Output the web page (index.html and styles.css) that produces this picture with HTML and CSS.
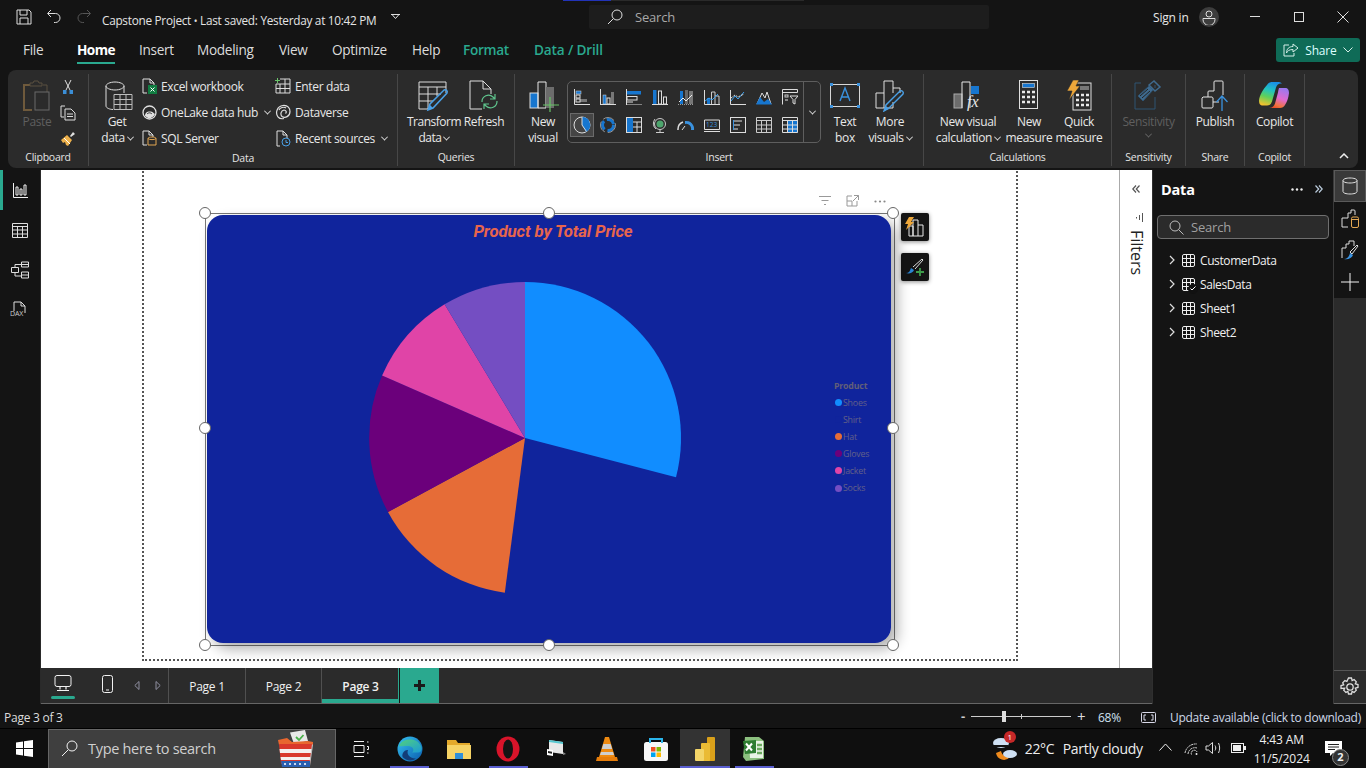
FILE: index.html
```html
<!DOCTYPE html>
<html lang="en">
<head>
<meta charset="utf-8">
<title>Capstone Project - Power BI Desktop</title>
<link rel="stylesheet" href="styles.css">
</head>
<body>
<div class="app">
  <header class="titlebar">
    <div class="sliver"></div>
    <div class="qat">
      <svg width="16" height="16" viewBox="0 0 16 16" class="ln"><path d="M1 1h12l2 2v12H1zM4 1v5h7V1M4 15v-6h8v6"/></svg>
      <svg width="16" height="16" viewBox="0 0 16 16" class="ln"><path d="M5 1L1.500 4.500 5 8M2 4.500h7.500a4.500 4.500 0 0 1 0 9H8"/></svg>
      <svg width="16" height="16" viewBox="0 0 16 16" class="ln dim"><path d="M11 1l3.500 3.500L11 8M14 4.500H6.500a4.500 4.500 0 0 0 0 9H8"/></svg>
    </div>
    <div class="doc-title">Capstone Project <span class="dot">•</span> Last saved: Yesterday at 10:42 PM</div>
    <svg class="doc-caret ln" width="9" height="6" viewBox="0 0 9 6"><path d="M0 .5h9M1 .5l3.500 4 3.500-4"/></svg>
    <div class="top-search">
      <svg width="16" height="16" viewBox="0 0 16 16" class="ln"><circle cx="10" cy="6" r="5"/><path d="M6.500 9.500L1 15"/></svg>
      <span>Search</span>
    </div>
    <div class="sign">Sign in</div>
    <div class="avatar"><svg width="14" height="15" viewBox="0 0 14 15" class="ln"><circle cx="7" cy="4" r="3"/><path d="M1 8.500h12v1a5 5 0 0 1-12 0z"/></svg></div>
    <div class="winctl">
      <svg width="12" height="12" viewBox="0 0 12 12" class="ln"><path d="M1 5.500h10"/></svg>
      <svg width="12" height="12" viewBox="0 0 12 12" class="ln"><rect x="1.500" y="1.500" width="9" height="9"/></svg>
      <svg width="12" height="12" viewBox="0 0 12 12" class="ln"><path d="M.5.500l11 11M11.500.500l-11 11"/></svg>
    </div>
  </header>

  <nav class="tabs">
    <a class="tab t-file">File</a>
    <a class="tab t-home active">Home</a>
    <a class="tab t-insert">Insert</a>
    <a class="tab t-model">Modeling</a>
    <a class="tab t-view">View</a>
    <a class="tab t-opt">Optimize</a>
    <a class="tab t-help">Help</a>
    <a class="tab t-format ctx">Format</a>
    <a class="tab t-drill ctx">Data / Drill</a>
    <button class="share">
      <svg width="16" height="14" viewBox="0 0 16 14" class="ln"><path d="M10 1l5 4-5 4V6.500C6 6.500 4.500 8 3.500 10 3.500 6 6 3.500 10 3.500zM6 2H1v11h10V10"/></svg>
      <span>Share</span>
      <svg width="10" height="6" viewBox="0 0 10 6" class="ln"><path d="M.5.500L5 5 9.500.500"/></svg>
    </button>
  </nav>

  <section class="ribbon">
    <div class="group g-clip">
      <div class="body">
        <div class="tool w-paste">
          <div class="ico"><svg width="30" height="32" viewBox="0 0 30 32" fill="none"><path d="M8 5H2v25h8" stroke="#6f5a3c" stroke-width="2"/><path d="M8 3h3l1-2h4l1 2h3v3H8zM21 5h4v7" stroke="#5a5040" /><rect x="13" y="12" width="14" height="18" stroke="#6a6a6a"/></svg></div>
          <div class="lbl off">Paste</div>
        </div>
        <div class="stack-small">
          <svg width="12" height="16" viewBox="0 0 12 16" fill="none"><path d="M3 1l5 10M9 1L4 11" stroke="#e0e0e0"/><rect x="1" y="11" width="3.500" height="4" fill="#3b8ed6"/><rect x="7.500" y="11" width="3.500" height="4" fill="#3b8ed6"/></svg>
          <svg width="16" height="16" viewBox="0 0 16 16" class="ln"><path d="M5 1H1v11h3M5 4h6l4 4v7H5zM7 9h6M7 11.500h6"/></svg>
          <svg width="16" height="16" viewBox="0 0 16 16" fill="none"><path d="M10 5l3-4 2 2-4 3z" fill="#e0e0e0"/><path d="M1 9l6-5 5 5-4 6-2-1-1-3-2 1z" fill="#eeb14b"/><path d="M4 7l6 6" stroke="#fff"/></svg>
        </div>
      </div>
      <div class="glabel">Clipboard</div>
    </div>

    <div class="group g-data">
      <div class="body">
        <div class="tool w-get">
          <div class="ico"><svg class="nudge2" width="28" height="32" viewBox="0 0 28 32"><path d="M1 6v20c0 2 4 3.500 7 3.500M19 6v7M1 6c0-2 4-4 9-4s9 2 9 4-4 4-9 4-9-2-9-4z" fill="none" stroke="#dedede"/><path d="M9 14.500h18v15H9zM9 19.500h18M9 24.500h18M15 14.500v15M21 14.500v15" fill="none" stroke="#bdbdbd"/></svg></div>
          <div class="lbl">Get</div>
          <div class="lbl">data <i class="chev"></i></div>
        </div>
        <div class="rows col-a">
          <div class="row"><svg width="15" height="16" viewBox="0 0 15 16" fill="none"><path d="M1 15V1h7l4 4v3M8 1v4h4M1 15h4" stroke="#e0e0e0"/><rect x="6" y="7" width="9" height="9" fill="#107c41"/><path d="M8.500 9.500l4 4M12.500 9.500l-4 4" stroke="#fff"/></svg><span>Excel workbook</span></div>
          <div class="row"><svg width="15" height="15" viewBox="0 0 15 15" fill="none"><circle cx="7.500" cy="7.500" r="6.500" stroke="#e0e0e0" stroke-width="1.300"/><path d="M3 11c0-4 3-5 6-4.500 2 .3 3 2 4 2.500-1 3-5 5-7 4z" fill="#e0e0e0"/><path d="M5 9c2-2 4-1 5 0" stroke="#2b2b2b"/></svg><span>OneLake data hub</span><i class="chev"></i></div>
          <div class="row"><svg width="15" height="16" viewBox="0 0 15 16" fill="none"><path d="M5 15H1V1h6l4 4v2M7 1v4h4" stroke="#e0e0e0"/><path d="M6 8.500c0-2 8-2 8 0V15H6z" stroke="#e4a853"/><path d="M6 8.500c1 1.500 7 1.500 8 0" stroke="#e4a853"/></svg><span>SQL Server</span></div>
        </div>
        <div class="rows">
          <div class="row"><svg width="16" height="16" viewBox="0 0 16 16" fill="none"><path d="M5 1h10v14H1V6h14M5 6v9M10 1v14M1 10.500h14" stroke="#dcdcdc" /><path d="M2.500 0v5M0 2.500h5" stroke="#6ac46a"/></svg><span>Enter data</span></div>
          <div class="row"><svg width="16" height="16" viewBox="0 0 16 16" fill="none" stroke="#e0e0e0" stroke-width="1.200"><path d="M3 13C0 9 2 2 8 1.500c5-.5 7 3 7 6 0 5-5 7-8 5-2-2-1-6 2-6.500 2 0 3 2 1.500 3.500"/><path d="M3 13c2 2 4 2 6 1.500M4 6C5 3.500 9 2.500 11 4"/></svg><span>Dataverse</span></div>
          <div class="row"><svg width="16" height="17" viewBox="0 0 16 17" fill="none"><path d="M5 16H2V1h6l4 4v3M8 1v4h4" stroke="#e0e0e0"/><circle cx="11" cy="12" r="4" stroke="#4aa0e6"/><path d="M11 10v2.500h2" stroke="#4aa0e6"/></svg><span>Recent sources</span><i class="chev"></i></div>
        </div>
      </div>
      <div class="glabel">Data</div>
    </div>

    <div class="group g-query">
      <div class="body">
        <div class="tool w-transform">
          <div class="ico"><svg width="32" height="32" viewBox="0 0 32 32" fill="none"><path d="M1 2h27v11M1 7h27M1 2v27h10M1 14h22M1 21h14M10 7v22M19 7v9" stroke="#dcdcdc"/><path d="M10 30l2-6L26 10c2-1 4 1 3 3L15 28z" stroke="#4aa0e6" stroke-width="1.500"/><path d="M10 30l2-5 3 3z" fill="#4aa0e6"/></svg></div>
          <div class="lbl">Transform</div>
          <div class="lbl">data <i class="chev"></i></div>
        </div>
        <div class="tool w-refresh">
          <div class="ico"><svg width="30" height="32" viewBox="0 0 30 32" fill="none"><path d="M13 29H1V1h13l8 8v5M14 1v8h8" stroke="#e0e0e0"/><path d="M13 22a6.500 6.500 0 0 1 11-5l2 2M28 21a6.500 6.500 0 0 1-11 5l-2-2M26 14v5h-5M15 29v-5h5" stroke="#5fc48d" stroke-width="1.200"/></svg></div>
          <div class="lbl">Refresh</div>
        </div>
      </div>
      <div class="glabel">Queries</div>
    </div>

    <div class="group g-insert">
      <div class="body">
        <div class="tool w-newvis">
          <div class="ico"><svg class="nudge1" width="30" height="32" viewBox="0 0 30 32" fill="none"><rect x="1" y="13" width="8" height="15" fill="#1776cf" stroke="#dcdcdc"/><path d="M9 28V2h8v26H9" stroke="#e8e8e8"/><rect x="17" y="7" width="8" height="21" fill="#6c6c6c"/><path d="M21 17v15M14 25h16" stroke="#66c466" stroke-width="1.200"/></svg></div>
          <div class="lbl">New</div>
          <div class="lbl">visual</div>
        </div>
        <div class="gallery">
          <div class="gal-grid">
            <span class="g"><svg viewBox="0 0 16 16" width="16" height="16" fill="none"><path d="M.5 0v15.500H16" stroke="#ddd"/><rect x="2" y="2" width="5" height="3" fill="#1776cf" stroke="#ddd" stroke-width=".5"/><rect x="2" y="6" width="4" height="3" stroke="#ddd"/><rect x="6" y="10" width="7" height="3" fill="#777"/><rect x="2" y="10" width="4" height="3" stroke="#ddd"/></svg></span>
            <span class="g"><svg viewBox="0 0 16 16" width="16" height="16" fill="none"><path d="M0 15.500h16M.5 0v16" stroke="#ddd"/><rect x="3" y="6" width="3" height="9" fill="#1776cf" stroke="#ddd" stroke-width=".5"/><rect x="7" y="9" width="3" height="6" stroke="#ddd"/><rect x="11" y="3" width="3" height="12" fill="#777"/></svg></span>
            <span class="g"><svg viewBox="0 0 16 16" width="16" height="16" fill="none"><path d="M.5 0v16H16" stroke="#ddd"/><rect x="1" y="2" width="14" height="3.500" fill="#1776cf"/><rect x="1" y="7.500" width="10" height="3.500" stroke="#ddd"/><path d="M1 13h6" stroke="#ddd"/></svg></span>
            <span class="g"><svg viewBox="0 0 16 16" width="16" height="16" fill="none"><path d="M0 15.500h16" stroke="#ddd"/><rect x="1" y="1" width="3.500" height="14" fill="#1776cf"/><rect x="6.500" y="2" width="3" height="13" stroke="#ddd"/><rect x="11.500" y="8" width="3" height="7" stroke="#ddd"/></svg></span>
            <span class="g"><svg viewBox="0 0 16 16" width="16" height="16" fill="none"><path d="M0 15.500h16" stroke="#999" stroke-dasharray="1"/><rect x="2" y="2" width="3" height="13" fill="#1776cf"/><rect x="7" y="1" width="3" height="14" fill="#666"/><rect x="11" y="2" width="4" height="13" fill="#777"/><path d="M1 13l4-4 3 3 6-6" stroke="#eee"/></svg></span>
            <span class="g"><svg viewBox="0 0 16 16" width="16" height="16" fill="none"><path d="M.5 1v14.500H16" stroke="#ddd"/><rect x="3" y="9" width="3" height="6" fill="#1776cf"/><path d="M7.500 15V3h3.500v12M11 7h4v8" stroke="#ccc"/><path d="M1 12l4-3 3 2 6-6" stroke="#3aa0ef"/></svg></span>
            <span class="g"><svg viewBox="0 0 16 16" width="16" height="16" fill="none"><path d="M.5 1v14.500H16" stroke="#ddd"/><path d="M1 12l4-5 3 3 6-7" stroke="#3aa0ef"/><path d="M1 9l4-3 3 2 6-3" stroke="#ddd" stroke-dasharray="2 1"/></svg></span>
            <span class="g"><svg viewBox="0 0 16 16" width="16" height="16" fill="none"><path d="M1 15L6 4l3 5 2-6 4 12" stroke="#ddd"/><path d="M0 15.500L4 8l4 5 4-3 4 5.500z" fill="#1776cf"/></svg></span>
            <span class="g"><svg viewBox="0 0 16 16" width="16" height="16" fill="none"><path d="M.5 15.500v-15h15v3M.5 3.500h15" stroke="#ddd"/><rect x="3" y="6" width="3" height="2" stroke="#ccc"/><rect x="3" y="10" width="3" height="2" fill="#888"/><path d="M8 7h8l-3 3.500V15l-2-1v-3.500z" stroke="#ddd"/></svg></span>
            <span class="g sel"><svg viewBox="0 0 18 18" width="18" height="18" fill="none"><circle cx="9" cy="9" r="8" stroke="#ddd"/><path d="M9 1a8 8 0 0 1 4 15L9 9z" fill="#1776cf"/><path d="M9 1v8l4.500 6.500" stroke="#ddd"/></svg></span>
            <span class="g"><svg viewBox="0 0 16 16" width="16" height="16" fill="none"><circle cx="8" cy="8" r="5.500" stroke="#1776cf" stroke-width="3" stroke-dasharray="9 3"/><circle cx="8" cy="8" r="7.500" stroke="#ddd" stroke-width=".6" stroke-dasharray="12 3"/></svg></span>
            <span class="g"><svg viewBox="0 0 16 16" width="16" height="16" fill="none"><rect x=".5" y=".5" width="15" height="15" stroke="#ddd"/><rect x="1" y="1" width="6" height="14" fill="#1776cf"/><path d="M7 5h8M11 5v10M7 10h8" stroke="#ddd"/></svg></span>
            <span class="g"><svg viewBox="0 0 16 16" width="16" height="16" fill="none"><circle cx="8" cy="7" r="5.500" stroke="#ccc"/><circle cx="8" cy="7" r="3.500" fill="#4da56d"/><path d="M8 12.500V15M4 15.500h8M3 2a7 7 0 0 0 1 10" stroke="#ccc"/></svg></span>
            <span class="g"><svg viewBox="0 0 18 12" width="18" height="12" fill="none"><path d="M1 11a8 8 0 0 1 5-8" stroke="#ddd" stroke-width="1.500"/><path d="M8 2a8 8 0 0 1 9 9h-3a5 5 0 0 0-6-6z" fill="#3a92df"/><path d="M5 11l3-4" stroke="#ddd"/></svg></span>
            <span class="g"><svg viewBox="0 0 16 14" width="16" height="14" fill="none"><path d="M.5 2v9.500h15V2zM0 13.500h16" stroke="#ddd"/><text x="2" y="9" class="svgnum">123</text></svg></span>
            <span class="g"><svg viewBox="0 0 16 16" width="16" height="16" fill="none"><rect x=".5" y=".5" width="15" height="15" stroke="#ddd"/><path d="M4 4h8M4 8h6M4 12h4" stroke="#ddd"/><path d="M3.500 3v10" stroke="#3a92df"/></svg></span>
            <span class="g"><svg viewBox="0 0 16 16" width="16" height="16" fill="none"><path d="M.5.500h15v15H.5zM.5 3.500h15M.5 8h15M.5 12h15M5.500 3.500v12M10.500 3.500v12" stroke="#ccc"/></svg></span>
            <span class="g"><svg viewBox="0 0 16 16" width="16" height="16" fill="none"><rect x="5" y="4" width="11" height="12" fill="#1776cf"/><path d="M.5.500h15v15H.5zM.5 3.500h15M.5 8h15M.5 12h15M5.500 3.500v12M10.500 3.500v12" stroke="#ddd"/></svg></span>
          </div>
          <div class="gal-more"><i class="chev bold"></i></div>
        </div>
        <div class="tool w-textbox">
          <div class="ico"><svg width="32" height="26" viewBox="0 0 32 26" fill="none"><rect x="1.500" y="2.500" width="29" height="22" stroke="#d8d8d8"/><path d="M1 1h3v3H1zM28 1h3v3h-3zM1 23h3v3H1zM28 23h3v3h-3z" fill="#3a92df"/><path d="M11 19l5-13 5 13M12.500 15h7" stroke="#3a92df" stroke-width="1.400"/></svg></div>
          <div class="lbl">Text</div>
          <div class="lbl">box</div>
        </div>
        <div class="tool w-more">
          <div class="ico"><svg width="30" height="32" viewBox="0 0 30 32" fill="none"><path d="M9 28H1V13h8M9 13V1h9v12M18 8h7v5M9 28V13M18 22v6H9" stroke="#e0e0e0"/><path d="M9 31l2-6L25 11c2-1 4 1 3 3L14 28z" stroke="#4aa0e6" stroke-width="1.400"/><path d="M9 31l2-5 3 3z" fill="#4aa0e6"/></svg></div>
          <div class="lbl">More</div>
          <div class="lbl">visuals <i class="chev"></i></div>
        </div>
      </div>
      <div class="glabel">Insert</div>
    </div>

    <div class="group g-calc">
      <div class="body">
        <div class="tool w-nvc">
          <div class="ico"><svg width="30" height="32" viewBox="0 0 30 32" fill="none"><rect x="1" y="14" width="8" height="14" fill="#6c6c6c" stroke="#aaa"/><path d="M9 28V2h8v26" stroke="#e8e8e8"/><rect x="18" y="6" width="8" height="8" fill="#1776cf"/><text x="14" y="27" class="fx">fx</text></svg></div>
          <div class="lbl">New visual</div>
          <div class="lbl">calculation <i class="chev"></i></div>
        </div>
        <div class="tool w-nm">
          <div class="ico"><svg width="20" height="30" viewBox="0 0 20 30" fill="none"><rect x=".5" y=".5" width="18" height="28" stroke="#e0e0e0"/><rect x="3.500" y="3.500" width="12" height="4" fill="#1776cf" stroke="#ddd" stroke-width=".6"/><path d="M3 12h3M8 12h3M13 12h3M3 17h3M8 17h3M13 17h3M3 22h3M8 22h3M13 22h3" stroke="#e8e8e8" stroke-width="2.500"/></svg></div>
          <div class="lbl">New</div>
          <div class="lbl">measure</div>
        </div>
        <div class="tool w-qm">
          <div class="ico"><svg width="26" height="32" viewBox="0 0 26 32" fill="none"><rect x="7" y="3" width="18" height="27" stroke="#e0e0e0"/><rect x="14" y="6" width="9" height="4" fill="#777"/><path d="M10 15h3M15 15h3M20 15h3M10 20h3M15 20h3M20 20h3M10 25h3M15 25h3M20 25h3" stroke="#e8e8e8" stroke-width="2.500"/><path d="M7 0h6l-3 6h4L3 20l3-9H1z" fill="#eda73a" stroke="#2b2b2b" stroke-width=".6"/></svg></div>
          <div class="lbl">Quick</div>
          <div class="lbl">measure</div>
        </div>
      </div>
      <div class="glabel">Calculations</div>
    </div>

    <div class="group g-sens">
      <div class="body center">
        <div class="tool">
          <div class="ico"><svg width="28" height="32" viewBox="0 0 28 32" fill="none" stroke="#2f5472"><path d="M1 3h6M1 3v26h20V17M21 5v3"/><path d="M4 16L15 6l4 4L9 21z" fill="#3f6a8e"/><path d="M15 5l5-4 6 6-5 4z" stroke="#3f6a8e" stroke-width="1.500"/><path d="M6 16l8-7M8 18l8-7" stroke="#222"/></svg></div>
          <div class="lbl off">Sensitivity</div>
          <div class="lbl off"><i class="chev dimc"></i></div>
        </div>
      </div>
      <div class="glabel">Sensitivity</div>
    </div>

    <div class="group g-share">
      <div class="body center">
        <div class="tool">
          <div class="ico"><svg width="28" height="32" viewBox="0 0 28 32" fill="none"><path d="M2 17h9a2 2 0 0 1 1 1v9a2 2 0 0 1-1 1H2a1 1 0 0 1-1-1v-9zM7 17v-5a1 1 0 0 1 1-1h5M13 11V2a1 1 0 0 1 1-1h7a1 1 0 0 1 1 1v13M12 22h6" stroke="#e4e4e4"/><path d="M21 31V16M15.500 22l5.500-6 5.500 6" stroke="#3a92df" stroke-width="1.300"/></svg></div>
          <div class="lbl">Publish</div>
        </div>
      </div>
      <div class="glabel">Share</div>
    </div>

    <div class="group g-copilot">
      <div class="body center">
        <div class="tool">
          <div class="ico"><svg width="30" height="30" viewBox="0 0 30 30">
            <defs>
              <linearGradient id="cpa" x1=".6" y1="0" x2=".3" y2="1"><stop offset="0" stop-color="#1a8fe8"/><stop offset=".35" stop-color="#22c3c0"/><stop offset=".65" stop-color="#5fd05a"/><stop offset="1" stop-color="#f2c12e"/></linearGradient>
              <linearGradient id="cpb" x1=".7" y1="0" x2=".3" y2="1"><stop offset="0" stop-color="#9a78f0"/><stop offset=".5" stop-color="#e06ad0"/><stop offset=".85" stop-color="#f0743e"/><stop offset="1" stop-color="#e8502a"/></linearGradient>
            </defs>
            <path d="M8 5c1-2 3-3 5-3h7c1 0 2 .5 3 1.500-3-.5-5 1-6 4l-4 14c-1 3-3 4-5 4H4c-3 0-4-2-4-5 .5-5 4-11 8-15.500z" fill="url(#cpa)"/>
            <path d="M20 8h6c3 0 4 2 4 5-.5 5-2 9-4 12-1 2-3 3-5 3H10c3 0 5-1.500 6-4.500l3-11c.2-1.500.5-3 1-4.500z" fill="url(#cpb)"/>
          </svg></div>
          <div class="lbl">Copilot</div>
        </div>
      </div>
      <div class="glabel">Copilot</div>
    </div>
    <div class="collapse"><svg width="10" height="6" viewBox="0 0 10 6" fill="none" stroke="#eee" stroke-width="1.500"><path d="M1 5l4-4 4 4"/></svg></div>
  </section>

  <main class="main">
    <aside class="rail">
      <div class="rail-btn on"><svg width="15" height="15" viewBox="0 0 15 15" class="ln bright"><path d="M.5 0v14.500H15M3 4h2v8H3zM7 6h2v6H7zM11 2h2v10h-2z"/></svg></div>
      <div class="rail-btn"><svg width="16" height="15" viewBox="0 0 16 15" class="ln"><path d="M.5.500h15v14H.5zM.5 3.500h15M.5 7h15M.5 11h15M5.500 3.500v11M10.500 3.500v11"/></svg></div>
      <div class="rail-btn"><svg width="18" height="18" viewBox="0 0 18 18" class="ln"><path d="M.5 6.500h7v5h-7zM10.500 1h7v5h-7zM10.500 11h7v6h-7zM4 6.500V3.500h6.500M4 11.500v3.500h6.500M10.500 3.500h7M10.500 14h7"/></svg></div>
      <div class="rail-btn"><div class="dax"><svg width="14" height="14" viewBox="0 0 14 14" class="ln"><path d="M1 10V1h7l4 4v7M8 1v4h4"/></svg><span>DAX</span></div></div>
    </aside>

    <div class="center-col">
      <div class="canvas-row">
        <div class="canvas">
          <div class="page">
            <div class="selection">
              <div class="vis-head">
                <svg width="12" height="10" viewBox="0 0 12 10" class="ln grey"><path d="M0 .5h12M2.500 4.500h7M5 8.500h2"/></svg>
                <svg width="13" height="12" viewBox="0 0 13 12" class="ln grey"><path d="M6 1H1v10h10V6M8 .5h4.500V5M12.500.5L7 6M1 6h5v5"/></svg>
                <svg width="12" height="3" viewBox="0 0 12 3" fill="#888"><circle cx="1.500" cy="1.500" r="1.100"/><circle cx="6" cy="1.500" r="1.100"/><circle cx="10.500" cy="1.500" r="1.100"/></svg>
              </div>
              <div class="card">
                <div class="vis-title">Product by Total Price</div>
                <svg class="pie" width="684" height="428" viewBox="207 215 684 428">
                  <path d="M525 438V282A156 156 0 0 1 676 477.300z" fill="#118dff"/>
                  <path d="M525 438L388 512A156 156 0 0 0 504.800 592.700z" fill="#e66c37"/>
                  <path d="M525 438L382.100 375.500A156 156 0 0 0 388 512z" fill="#6b007b"/>
                  <path d="M525 438L444.600 304.300A156 156 0 0 0 382.100 375.500z" fill="#e044a7"/>
                  <path d="M525 438V282A156 156 0 0 0 444.600 304.300z" fill="#744ec2"/>
                </svg>
                <div class="legend">
                  <div class="leg-head">Product</div>
                  <div class="leg"><i class="lc1"></i>Shoes</div>
                  <div class="leg"><i class="lc2"></i>Shirt</div>
                  <div class="leg"><i class="lc3"></i>Hat</div>
                  <div class="leg"><i class="lc4"></i>Gloves</div>
                  <div class="leg"><i class="lc5"></i>Jacket</div>
                  <div class="leg"><i class="lc6"></i>Socks</div>
                </div>
              </div>
              <i class="h h-tl"></i><i class="h h-tc"></i><i class="h h-tr"></i>
              <i class="h h-ml"></i><i class="h h-mr"></i>
              <i class="h h-bl"></i><i class="h h-bc"></i><i class="h h-br"></i>
              <div class="float f1"><svg width="20" height="20" viewBox="0 0 20 20" fill="none"><path d="M4 19V9h4v10M8 19V3h5v16M13 8h5v11H4" stroke="#e8e8e8"/><path d="M4 0h5L6 5h3L1 13l2-6H0z" fill="#eda73a"/></svg></div>
              <div class="float f2"><svg width="20" height="18" viewBox="0 0 20 18" fill="none"><path d="M8 9l9-8 1 1-8 9" stroke="#ddd"/><path d="M1 15c3 0 4-2 5-5l3 2c-1 3-5 4-8 3z" fill="#2a84d2"/><path d="M15 10v8M11 14h8" stroke="#3d9b4a" stroke-width="1.800"/></svg></div>
            </div>
          </div>
        </div>
        <div class="filters">
          <svg width="8" height="8" viewBox="0 0 8 8" fill="none" stroke="#555" stroke-width="1.200"><path d="M4 .5L.8 4 4 7.500M7.500.5L4.300 4l3.200 3.500"/></svg>
          <svg class="fico" width="7" height="9" viewBox="0 0 7 9" fill="none" stroke="#555"><path d="M.5 4v1.500M3.500 2v5M6.500 0v9"/></svg>
          <div class="f-text">Filters</div>
        </div>
      </div>
      <div class="pagebar">
        <div class="view-btns">
          <div class="vb on"><svg width="18" height="17" viewBox="0 0 18 17" class="ln bright"><rect x="1" y=".5" width="16" height="11" rx="2"/><path d="M6 12v2.500M12 12v2.500M3 15.500h12" stroke-width="1.200"/></svg></div>
          <div class="vb"><svg width="11" height="18" viewBox="0 0 11 18" class="ln bright"><rect x=".5" y=".5" width="10" height="17" rx="2"/><path d="M4 15h3"/></svg></div>
        </div>
        <div class="pg-arrows">
          <svg width="6" height="9" viewBox="0 0 6 9" fill="none" stroke="#8f8fa0"><path d="M5 .5v8L.8 4.500z"/></svg>
          <svg width="6" height="9" viewBox="0 0 6 9" fill="none" stroke="#8f8fa0"><path d="M1 .5v8l4.200-4z"/></svg>
        </div>
        <div class="pg">Page 1</div>
        <div class="pg p2">Page 2</div>
        <div class="pg cur">Page 3</div>
        <div class="pg-add"><svg width="11" height="11" viewBox="0 0 11 11" fill="#1a1a1a"><path d="M4 0h3v4h4v3H7v4H4V7H0V4h4z"/></svg></div>
      </div>
    </div>

    <aside class="data-pane">
      <div class="dp-head">
        <h2>Data</h2>
        <svg width="12" height="3" viewBox="0 0 12 3" fill="#eee"><circle cx="1.500" cy="1.500" r="1.200"/><circle cx="6" cy="1.500" r="1.200"/><circle cx="10.500" cy="1.500" r="1.200"/></svg>
        <svg class="dp-close" width="8" height="8" viewBox="0 0 8 8" fill="none" stroke="#bcd" stroke-width="1.200"><path d="M.5.500L3.700 4 .5 7.500M4 .5L7.200 4 4 7.500"/></svg>
      </div>
      <div class="dp-search">
        <svg width="15" height="15" viewBox="0 0 15 15" class="ln grey2"><circle cx="6" cy="6" r="5"/><path d="M9.500 9.500L14.500 14.500"/></svg>
        <span>Search</span>
      </div>
      <ul class="tree">
        <li><svg class="tc" width="6" height="10" viewBox="0 0 6 10"><path d="M1 1l4 4-4 4"/></svg><svg class="tt" width="13" height="13" viewBox="0 0 13 13"><path d="M2 .5h9A1.500 1.500 0 0 1 12.500 2v9a1.500 1.500 0 0 1-1.500 1.500H2A1.500 1.500 0 0 1 .5 11V2A1.500 1.500 0 0 1 2 .5zM.5 4.500h12M.5 8.500h12M4.500.5v12M8.500.5v12"/></svg><span>CustomerData</span></li>
        <li><svg class="tc" width="6" height="10" viewBox="0 0 6 10"><path d="M1 1l4 4-4 4"/></svg><span class="tt-wrap"><svg class="tt" width="13" height="13" viewBox="0 0 13 13"><path d="M2 .5h9A1.500 1.500 0 0 1 12.500 2v9a1.500 1.500 0 0 1-1.500 1.500H2A1.500 1.500 0 0 1 .5 11V2A1.500 1.500 0 0 1 2 .5zM.5 4.500h12M.5 8.500h12M4.500.5v12M8.500.5v12"/></svg><i class="check"><svg width="6" height="5" viewBox="0 0 6 5" fill="none" stroke="#fff"><path d="M.5 2.500L2 4l3.500-3.500"/></svg></i></span><span>SalesData</span></li>
        <li><svg class="tc" width="6" height="10" viewBox="0 0 6 10"><path d="M1 1l4 4-4 4"/></svg><svg class="tt" width="13" height="13" viewBox="0 0 13 13"><path d="M2 .5h9A1.500 1.500 0 0 1 12.500 2v9a1.500 1.500 0 0 1-1.500 1.500H2A1.500 1.500 0 0 1 .5 11V2A1.500 1.500 0 0 1 2 .5zM.5 4.500h12M.5 8.500h12M4.500.5v12M8.500.5v12"/></svg><span>Sheet1</span></li>
        <li><svg class="tc" width="6" height="10" viewBox="0 0 6 10"><path d="M1 1l4 4-4 4"/></svg><svg class="tt" width="13" height="13" viewBox="0 0 13 13"><path d="M2 .5h9A1.500 1.500 0 0 1 12.500 2v9a1.500 1.500 0 0 1-1.500 1.500H2A1.500 1.500 0 0 1 .5 11V2A1.500 1.500 0 0 1 2 .5zM.5 4.500h12M.5 8.500h12M4.500.5v12M8.500.5v12"/></svg><span>Sheet2</span></li>
      </ul>
    </aside>

    <aside class="right-rail">
      <div class="rr-top">
        <div class="rr-btn on"><svg width="16" height="18" viewBox="0 0 16 18" class="ln"><path d="M1 3.500v11c0 1.500 3 2.500 7 2.500s7-1 7-2.500v-11M1 3.500C1 2 4 1 8 1s7 1 7 2.500S12 6 8 6 1 5 1 3.500z"/></svg></div>
        <div class="rr-btn"><svg width="18" height="19" viewBox="0 0 18 19" fill="none"><path d="M1 18V9h6M7 18H1M7 9V4h3V1h3a1 1 0 0 1 1 1v4" stroke="#ddd"/><rect x="10.500" y="8" width="7" height="10.500" rx="1.500" stroke="#e4a853"/><path d="M10.500 10.500h7" stroke="#e4a853"/></svg></div>
        <div class="rr-btn"><svg width="18" height="20" viewBox="0 0 18 20" fill="none"><path d="M1 18V8h4V4h3V1h5v5" stroke="#ddd"/><path d="M9 12l7-7 1 1-6 8z" stroke="#ddd"/><path d="M3 19c3 0 5-2 6-6l3 2c-1 3-5 5-9 4z" fill="#3a92df"/></svg></div>
        <div class="rr-btn"><svg width="18" height="18" viewBox="0 0 18 18" class="ln bright"><path d="M9 0v18M0 9h18"/></svg></div>
      </div>
      <div class="rr-fill"></div>
      <div class="rr-gear"><svg width="20" height="20" viewBox="0 0 20 20" fill="none" stroke="#ddd" stroke-width="1.300"><circle cx="10" cy="10" r="3.200"/><path d="M8.500 1h3l.6 2.500 2-.9 2.200 2.200-1 2 2.700.7v3l-2.700.7 1 2-2.200 2.200-2-1-.6 2.600h-3l-.6-2.600-2 1-2.200-2.200 1-2L1 11.500v-3l2.700-.7-1-2 2.200-2.200 2 .9z"/></svg></div>
    </aside>
  </main>

  <footer class="status">
    <div class="st-page">Page 3 of 3</div>
    <div class="zoom">
      <span class="zm">-</span>
      <div class="slider"><i class="thumb"></i><i class="tick"></i></div>
      <span class="zp">+</span>
    </div>
    <div class="pct">68%</div>
    <svg class="fit" width="15" height="11" viewBox="0 0 15 11" fill="none" stroke="#d8d8e8"><rect x=".5" y=".5" width="14" height="10" rx="1"/><path d="M5 3H3v5h2M10 3h2v5h-2"/></svg>
    <div class="update">Update available (click to download)</div>
  </footer>

  <div class="taskbar">
    <div class="tb-start"><svg width="17" height="17" viewBox="0 0 17 17" fill="#fff"><path d="M0 2.500l7-1V8H0zM8 1.300l9-1.300V8H8zM0 9h7v6.500l-7-1zM8 9h9v8l-9-1.300z"/></svg></div>
    <div class="tb-search">
      <svg width="17" height="17" viewBox="0 0 17 17" class="ln bright"><circle cx="11" cy="6" r="5"/><path d="M7 10l-6 6"/></svg>
      <span>Type here to search</span>
      <svg class="ballot" width="36" height="38" viewBox="0 0 36 38">
        <path d="M12 2.500l15-2.500 3 11-14 3z" fill="#e8e8e8"/><path d="M18 7l3 3 4.500-5" stroke="#4ab04a" stroke-width="1.800" fill="none"/>
        <path d="M0 10l9-2 5 4 16-1 5 1v3H1z" fill="#e8672f"/>
        <path d="M1 14h33v4l-2 16H3z" fill="#d9392c"/>
        <path d="M1.500 19h32.500l-.5 4H2zM2.500 27h30l-.4 3H3z" fill="#f4f0ee"/>
        <path d="M34 14l1 1-3 21h-1z" fill="#bdbdbd"/>
        <path d="M3 31h29v6H4z" fill="#2a5fb0"/>
        <path d="M6 34h2M11 34h2M16 34h2M21 34h2M26 34h2" stroke="#fff" stroke-width="1.500"/>
      </svg>
    </div>
    <div class="tb-apps">
      <div class="app-i"><svg width="17" height="16" viewBox="0 0 17 16" class="ln bright"><path d="M2 .5h10M2 15.500h10M2 4.500h10v7H2zM15 1h1.500M15 5.500h1.500v3H15M15 12h1.500"/></svg></div>
      <div class="app-i run"><svg width="26" height="26" viewBox="0 0 26 26"><defs><linearGradient id="ea" x1="0" y1="0" x2="1" y2="1"><stop offset="0" stop-color="#35c1f1"/><stop offset="1" stop-color="#0b5cad"/></linearGradient><linearGradient id="eb" x1="0" y1="0" x2="1" y2="1"><stop offset="0" stop-color="#52d17c"/><stop offset="1" stop-color="#1a9ad6"/></linearGradient></defs><circle cx="13" cy="13" r="12.500" fill="url(#ea)"/><path d="M2 10C4 3 18 0 23.500 9c2.500 4 1 7-2 7.500H15c2-1 2-5-1.500-6C9 9 4 11 2 10z" fill="url(#eb)"/><path d="M11 14c-2 5 3 9 8 8.500-3 2.500-9 3-13-1-2-3 1-8 5-7.500z" fill="#123d78"/></svg></div>
      <div class="app-i"><svg width="24" height="22" viewBox="0 0 24 22"><path d="M0 2h9l2 3h12v16H0z" fill="#e3a92b"/><path d="M0 7h24v14H0z" fill="#f6d365"/><path d="M8 15h8v6H8z" fill="#2f8fd8"/></svg></div>
      <div class="app-i run"><svg width="24" height="26" viewBox="0 0 24 26"><ellipse cx="12" cy="13" rx="11.500" ry="12.500" fill="#d8142a"/><ellipse cx="12" cy="13" rx="5" ry="9.500" fill="#141414"/></svg></div>
      <div class="app-i"><svg width="20" height="20" viewBox="0 0 20 20"><path d="M2 1l14 2v12L2 13z" fill="#e8e8e8"/><path d="M2 1l14 2v2L2 3z" fill="#56c7d0"/><path d="M16 13l3 2-3 1z" fill="#888"/><path d="M0 10l6 1v6l-6-1z" fill="#fff"/><path d="M1 12l4 .7v2l-4-.7z" fill="#222"/></svg></div>
      <div class="app-i"><svg width="22" height="24" viewBox="0 0 22 24"><path d="M9 0h4l6 20H3z" fill="#ef8a11"/><path d="M7.300 7h7.400l1.400 5H5.900zM5 15h12l1 3H4z" fill="#cfcfcf"/><path d="M1 20h20l1 4H0z" fill="#e67d0b"/></svg></div>
      <div class="app-i"><svg width="24" height="24" viewBox="0 0 24 24"><rect x="0" y="5" width="24" height="19" rx="2.500" fill="#f7f7f7"/><path d="M6 6V2h12v4" fill="none" stroke="#2bb6ec" stroke-width="2"/><rect x="7" y="10" width="4.500" height="4.500" fill="#f25022"/><rect x="12.500" y="10" width="4.500" height="4.500" fill="#7fba00"/><rect x="7" y="15.500" width="4.500" height="4.500" fill="#00a4ef"/><rect x="12.500" y="15.500" width="4.500" height="4.500" fill="#ffb900"/></svg></div>
      <div class="app-i run act"><svg width="20" height="24" viewBox="0 0 20 24"><rect x="12" y="0" width="8" height="24" rx="1" fill="#d9a01a"/><rect x="6" y="6" width="9" height="18" rx="1" fill="#eabb34"/><rect x="0" y="12" width="9" height="12" rx="1" fill="#f3d568"/></svg></div>
      <div class="app-i run"><svg width="24" height="24" viewBox="0 0 24 24"><path d="M3 0h14l5 4v18L4 24 1 20z" fill="#8cc07f"/><path d="M7 4h14v17H8z" fill="#eaf3e6"/><path d="M1 4l13-1v13L3 17z" fill="#2f7d32"/><path d="M4 6.500l6 7M10 6.500l-6 7" stroke="#fff" stroke-width="2"/><path d="M15 8h5M15 12h5M15 16h5" stroke="#6aa85e" stroke-width="2.500"/></svg></div>
    </div>
    <div class="tray">
      <div class="weather"><svg width="26" height="24" viewBox="0 0 26 24"><path d="M4 17a8 8 0 0 0 14 4c-5 0-8-2-9-6z" fill="#ef8a1c"/><ellipse cx="9" cy="7" rx="8" ry="5" fill="#cfe0f3"/><path d="M1 9h15v2H1z" fill="#111"/><ellipse cx="18" cy="18" rx="7" ry="4" fill="#cfe0f3"/></svg><i class="wbadge">1</i></div>
      <span class="temp">22°C</span>
      <span class="cond">Partly cloudy</span>
      <svg class="up" width="13" height="8" viewBox="0 0 13 8" fill="none" stroke="#eee"><path d="M.5 7.500l6-6.500 6 6.500"/></svg>
      <svg class="wifi" width="14" height="14" viewBox="0 0 14 14" fill="none" stroke="#ddd"><path d="M1 12a11 11 0 0 1 12-9M4 13a7 7 0 0 1 9-6M7.500 13.500a3 3 0 0 1 5.500-2.500" stroke-dasharray="2 .6"/><circle cx="12.500" cy="13" r="1" fill="#eee" stroke="none"/></svg>
      <svg class="spk" width="16" height="14" viewBox="0 0 16 14" fill="none" stroke="#ddd"><path d="M1 5h2.500L7.500 1.500v11L3.500 9H1zM10 4.500c1 1.500 1 3.500 0 5M13.500 2c1.500 3 1.500 7 0 10" /></svg>
      <svg class="bat" width="15" height="10" viewBox="0 0 15 10" fill="none"><rect x=".5" y=".5" width="12" height="9" stroke="#eee"/><rect x="2" y="2" width="8" height="6" fill="#eee"/><rect x="13" y="3" width="2" height="4" fill="#eee"/></svg>
      <div class="clock"><div>4:43 AM</div><div>11/5/2024</div></div>
      <div class="notif"><svg width="17" height="15" viewBox="0 0 17 15"><path d="M0 0h17v12H8l-3 3v-3H0z" fill="#fff"/><path d="M3 3.500h11M3 6h11M3 8.500h7" stroke="#222"/></svg><i class="nbadge">2</i></div>
    </div>
  </div>
</div>
</body>
</html>
```

FILE: styles.css
```css
* { box-sizing: border-box; }
html, body { margin: 0; padding: 0; height: 100%; overflow: hidden; background: #141414; }
body { font-family: "Open Sans", "Noto Sans", "Liberation Sans", sans-serif; color: #eee; font-size: 12px; }
i { font-style: normal; }
.ln { fill: none; stroke: #dedede; stroke-width: 1; }
.ln.dim { stroke: #555; }
.ln.bright { stroke: #f2f2f2; }
.ln.grey { stroke: #999; }
.ln.grey2 { stroke: #bbb; }
svg { display: block; flex: none; }
.app { width: 1366px; height: 768px; display: flex; flex-direction: column; position: relative; }

/* title */
.titlebar { height: 36px; flex: none; display: flex; align-items: center; padding-left: 16px; position: relative; background: #141414; }
.sliver { position: absolute; left: 563px; top: 0; width: 241px; height: 1px; background: #2a2a2a; }
.sliver::before { content: ""; display: block; width: 48px; height: 1px; background: #2233b8; }
.qat { display: flex; gap: 14px; margin-top: -3px; width: 86px; flex: none; }
.doc-title { font-size: 11.800px; letter-spacing: -.28px; color: #e4e4e4; width: 282px; white-space: nowrap; margin-top: 4px; }
.doc-title .dot { font-size: 10px; }
.doc-caret { margin: -3px 0 0 7px; }
.top-search { margin-left: 189px; width: 400px; height: 24px; margin-top: -2px; background: #1d1d1d; border-radius: 2px; display: flex; align-items: center; padding-left: 18px; gap: 12px; color: #a8a8a8; font-size: 13px; letter-spacing: -.2px; }
.sign { margin-left: 164px; width: 46px; font-size: 12px; color: #e8e8e8; letter-spacing: -.2px; margin-top: -2px; }
.avatar { width: 20px; height: 20px; border-radius: 50%; background: #3d3d3d; display: flex; align-items: center; justify-content: center; margin-top: -2px; }
.winctl { display: flex; gap: 32px; margin-left: 30px; margin-top: -2px; align-items: center; }

/* tabs */
.tabs { height: 34px; flex: none; display: flex; align-items: flex-start; position: relative; background: #141414; }
.tab { font-size: 13.600px; letter-spacing: -.3px; line-height: 28px; color: #dcdcdc; white-space: nowrap; height: 28px; }
.t-file { margin-left: 23px; width: 54px; }
.t-home { width: 38px; color: #fff; font-weight: 700; border-bottom: 2px solid #2aa98f; letter-spacing: -.55px; }
.t-insert { margin-left: 24px; width: 58px; }
.t-model { width: 82px; }
.t-view { width: 53px; }
.t-opt { width: 80px; }
.t-help { width: 51px; }
.t-format { width: 71px; }
.t-drill { letter-spacing: -.15px; }
.ctx { color: #2aa98f; font-weight: 600; }
.share { margin-left: 673px; margin-top: 2px; width: 84px; height: 24px; border: 0; border-radius: 3px; background: #0f6b57; color: #dff; display: flex; align-items: center; justify-content: center; gap: 6px; padding: 0; font: inherit; font-size: 12px; letter-spacing: -.2px; }
.share .ln { stroke: #d5eee8; }

/* ribbon */
.ribbon { height: 98px; flex: none; margin: 0 8px 2px; padding-top: 4px; background: #2b2b2b; border-radius: 8px; display: flex; position: relative; }
.group { height: 92px; display: flex; flex-direction: column; border-right: 1px solid #474747; flex: none; }
.body { flex: 1; display: flex; padding-top: 6px; }
.body.center { justify-content: center; }
.glabel { height: 16px; line-height: 17px; margin-bottom: 1px; text-align: center; font-size: 10.500px; font-weight: 500; color: #e4e4e4; letter-spacing: -.25px; white-space: nowrap; }
.g-clip { width: 81px; } .g-data { width: 309px; } .g-query { width: 117px; } .g-insert { width: 409px; }
.g-calc { width: 188px; } .g-sens { width: 74px; } .g-share { width: 59px; } .g-copilot { width: 60px; }
.tool { display: flex; flex-direction: column; align-items: center; flex: none; }
.ico { height: 34px; display: flex; align-items: flex-start; justify-content: center; }
.nudge2 { margin-left: 3px; }
.nudge1 { margin-left: 2px; }
.lbl { font-size: 12px; letter-spacing: -.35px; line-height: 16px; color: #e8e8e8; white-space: nowrap; display: flex; align-items: center; gap: 3px; }
.lbl.off { color: #5f5f5f; }
.chev { display: inline-block; width: 5px; height: 5px; border-right: 1px solid #ddd; border-bottom: 1px solid #ddd; transform: rotate(45deg) translate(-1px, -1px); flex: none; }
.chev.bold { border-width: 1.500px; }
.chev.dimc { border-color: #666; margin-top: 3px; }
.w-paste { width: 40px; margin-left: 9px; }
.stack-small { width: 22px; display: flex; flex-direction: column; align-items: center; gap: 10px; margin-top: -1px; }
.w-get { width: 42px; margin-left: 7px; }
.rows { display: flex; flex-direction: column; gap: 2px; margin-top: -6px; }
.col-a { width: 133px; margin-left: 4px; }
.row { height: 24px; display: flex; align-items: center; gap: 4px; font-size: 12px; letter-spacing: -.35px; color: #e8e8e8; white-space: nowrap; }
.row .chev { margin-left: 3px; }
.w-transform { width: 60px; margin-left: 6px; }
.w-transform .lbl { letter-spacing: -.5px; }
.w-refresh { width: 40px; }
.w-newvis { width: 42px; margin-left: 7px; }
.gallery { margin: 1px 0 0 3px; width: 254px; height: 62px; border: 1px solid #5e5e5e; border-radius: 5px; display: flex; }
.gal-grid { width: 236px; display: grid; grid-template-columns: repeat(9, 26px); grid-template-rows: 28px 28px; padding: 1px 0 0 1px; border-right: 1px solid #5e5e5e; }
.g { display: flex; align-items: center; justify-content: center; }
.g.sel { background: #454545; border: 1px solid #6a6a6a; width: 24px; height: 24px; margin: 2px 0 0 1px; }
.gal-more { flex: 1; display: flex; align-items: center; justify-content: center; }
.w-textbox { width: 40px; margin-left: 4px; }
.w-textbox .ico { padding-top: 2px; }
.w-more { width: 50px; }
.svgnum { font-size: 6.500px; fill: #3a92df; font-family: "Open Sans", sans-serif; }
.fx { font-family: "Liberation Serif", serif; font-style: italic; font-size: 16px; fill: #e8e8e8; }
.w-nvc { width: 80px; margin-left: 4px; }
.w-nm { width: 42px; }
.w-qm { width: 46px; margin-left: 6px; }
.collapse { flex: 1; display: flex; justify-content: flex-end; align-items: flex-end; padding: 0 9px 7px 0; height: 92px; }

/* main */
.main { height: 534px; flex: none; display: flex; }
.rail { width: 41px; flex: none; background: #141414; display: flex; flex-direction: column; border-right: 1px solid #2a2a2a; }
.rail-btn { height: 40px; display: flex; align-items: center; justify-content: center; }
.rail-btn.on { box-shadow: inset 3px 0 0 #2aa98f; }
.dax { position: relative; width: 18px; height: 18px; display: flex; justify-content: center; }
.dax span { position: absolute; left: -1px; top: 9px; font-size: 7px; line-height: 8px; color: #ccc; letter-spacing: -.1px; }
.center-col { width: 1111px; flex: none; display: flex; flex-direction: column; }
.canvas-row { height: 498px; flex: none; display: flex; }
.canvas { width: 1078px; flex: none; background: #fff; overflow: hidden; }
.page { width: 876px; height: 502px; margin: -11px 0 0 101px; border: 2px dotted #555; position: relative; padding: 0; }
.selection { position: absolute; left: 61px; top: 52px; width: 690px; height: 433px; border: 1px solid #777; padding: 1px; }
.card { width: 684px; height: 428px; background: #10249c; border-radius: 16px; position: relative; overflow: hidden; }
.selection::after { content: ""; position: absolute; left: 1px; top: 1px; width: 684px; height: 428px; border-radius: 16px; box-shadow: 6px 6px 14px rgba(0,0,0,.32); pointer-events: none; }
.vis-head { position: absolute; top: -19px; right: 8px; display: flex; gap: 15px; align-items: center; height: 12px; }
.vis-title { position: absolute; left: 0; right: 0; top: 6px; padding-left: 8px; text-align: center; color: #e8654c; font-family: "Roboto", sans-serif; font-weight: 700; font-style: italic; font-size: 16.800px; line-height: 20px; letter-spacing: -.1px; }
.pie { position: absolute; left: 0; top: 0; }
.legend { position: absolute; left: 627px; top: 164px; width: 50px; color: #636089; font-size: 8.800px; letter-spacing: -.2px; }
.leg-head { font-weight: 700; line-height: 15px; color: #625f78; }
.leg { height: 17.100px; display: flex; align-items: center; gap: 1px; white-space: nowrap; }
.leg i { width: 7px; height: 7px; border-radius: 50%; flex: none; margin-left: 1px; }
.lc1 { background: #118dff; } .lc2 { background: #10249c; } .lc3 { background: #e66c37; } .lc4 { background: #6b007b; } .lc5 { background: #e044a7; } .lc6 { background: #744ec2; }
.h { position: absolute; width: 12px; height: 12px; border-radius: 50%; background: #fff; border: 1px solid #666; z-index: 2; }
.h-tl { left: -7px; top: -7px; } .h-tc { left: 337px; top: -7px; } .h-tr { left: 681px; top: -7px; }
.h-ml { left: -7px; top: 208px; } .h-mr { left: 681px; top: 208px; }
.h-bl { left: -7px; top: 425px; } .h-bc { left: 337px; top: 425px; } .h-br { left: 681px; top: 425px; }
.float { position: absolute; left: 695px; width: 28px; height: 28px; background: #141414; border-radius: 2px; box-shadow: 0 1px 4px rgba(0,0,0,.45); display: flex; align-items: center; justify-content: center; }
.f1 { top: -1px; } .f2 { top: 39px; }
.filters { width: 33px; flex: none; background: #fff; border-left: 1px solid #aaa; display: flex; flex-direction: column; align-items: center; padding: 15px 0 0 0; }
.fico { margin: 20px 0 0 6px; }
.f-text { writing-mode: vertical-rl; margin: 8px 0 0 2px; color: #222; font-size: 16px; line-height: 18px; }
.pagebar { height: 36px; flex: none; background: #2b2b2b; border-bottom: 1px solid #666; display: flex; align-items: stretch; }
.view-btns { display: flex; width: 88px; }
.vb { width: 44px; display: flex; justify-content: center; padding-top: 7px; position: relative; }
.vb.on::after { content: ""; position: absolute; left: 10px; top: 28px; width: 24px; height: 3px; border-radius: 2px; background: #2aa98f; }
.pg-arrows { display: flex; width: 39px; gap: 15px; padding: 13px 0 0 5px; }
.pg { width: 77px; border-left: 1px solid #505050; display: flex; align-items: center; justify-content: center; font-size: 12px; letter-spacing: -.25px; color: #f0f0f0; padding-top: 2px; }
.pg.p2 { width: 76px; }
.pg.cur { width: 79px; font-weight: 600; box-shadow: inset -1px -4px 0 #2aa98f; border-right: 1px solid #141414; }
.pg-add { width: 39px; background: #2aa98f; display: flex; align-items: center; justify-content: center; }

/* data pane */
.data-pane { width: 181px; flex: none; background: #141414; border-left: 1px solid #2f2f2f; padding: 0 4px; }
.dp-head { display: flex; align-items: center; height: 38px; padding: 0 0 0 4px; }
.dp-head h2 { margin: 0; width: 130px; font-size: 14.500px; font-weight: 700; letter-spacing: -.2px; color: #fff; }
.dp-close { margin-left: 12px; }
.dp-search { margin-top: 7px; width: 172px; height: 24px; border: 1px solid #6f6f6f; border-radius: 4px; background: #2b2b2b; display: flex; align-items: center; padding-left: 11px; gap: 7px; color: #a0a0a0; font-size: 13px; letter-spacing: -.2px; }
.tree { list-style: none; margin: 9px 0 0; padding: 0 0 0 12px; }
.tree li { height: 24px; display: flex; align-items: center; font-size: 12px; letter-spacing: -.4px; color: #f0f0f0; white-space: nowrap; }
.tc { fill: none; stroke: #ddd; stroke-width: 1.200; margin-right: 7px; }
.tt { fill: none; stroke: #eee; stroke-width: 1; margin-right: 5px; }
.tt-wrap { position: relative; display: block; }
.check { position: absolute; left: 6px; top: 6px; width: 10px; height: 10px; border-radius: 50%; background: #111; display: flex; align-items: center; justify-content: center; }
.right-rail { width: 33px; flex: none; background: #2b2b2b; border-left: 1px solid #3a3a3a; display: flex; flex-direction: column; }
.rr-top { background: #141414; }
.rr-btn { height: 32px; display: flex; align-items: center; justify-content: center; }
.rr-btn.on { background: #3a3a3a; border: 1px solid #5a5a5a; }
.rr-fill { flex: 1; border-bottom: 1px solid #555; height: 0; }
.rr-gear { height: 33px; display: flex; align-items: center; justify-content: center; border-bottom: 1px solid #666; }

/* status */
.status { height: 24px; flex: none; background: #141414; display: flex; align-items: center; font-size: 12px; letter-spacing: -.25px; color: #dcdcdc; padding-top: 2px; }
.st-page { margin-left: 4px; width: 957px; }
.zoom { display: flex; align-items: center; width: 128px; position: relative; margin-top: -2px; }
.zm { width: 10px; font-size: 13px; font-weight: 700; color: #ccc; }
.slider { width: 100px; height: 1px; background: #ccc; position: relative; }
.thumb { position: absolute; left: 31px; top: -5px; width: 4px; height: 11px; background: #ddd; }
.tick { position: absolute; left: 50px; top: -2px; width: 1px; height: 5px; background: #ccc; }
.zp { margin-left: 6px; font-size: 15px; color: #ddd; line-height: 12px; }
.pct { width: 43px; margin-left: 9px; color: #cfe0f0; }
.fit { margin-right: 14px; }
.update { color: #cfd8e8; white-space: nowrap; letter-spacing: -.27px; }

/* taskbar */
.taskbar { height: 40px; flex: none; background: #0f0f0f; display: flex; border-top: 1px solid #000; }
.tb-start { width: 48px; display: flex; align-items: center; justify-content: center; }
.tb-search { width: 288px; background: #3f3f3f; border: 1px solid #666; border-bottom: 0; display: flex; align-items: center; padding: 0 0 2px 12px; gap: 10px; color: #d0d0d0; font-size: 14.500px; letter-spacing: -.3px; position: relative; }
.ballot { position: absolute; left: 229px; top: 0; }
.tb-apps { display: flex; }
.app-i { width: 49.200px; display: flex; align-items: center; justify-content: center; position: relative; }
.app-i.run::after { content: ""; position: absolute; left: 5px; right: 5px; bottom: 0; height: 2px; background: #5a5fd0; }
.app-i.act { background: #333; }
.app-i.act::after { left: 0; right: 0; }
.tray { display: flex; align-items: center; position: relative; flex: 1; color: #eee; font-size: 14px; letter-spacing: -.3px; padding-bottom: 1px; }
.weather { position: relative; margin-left: 213px; width: 33px; }
.wbadge { position: absolute; left: 12px; top: -5px; width: 12px; height: 12px; border-radius: 50%; background: #c62828; color: #fff; font-size: 8px; line-height: 12px; text-align: center; }
.temp { width: 38px; }
.cond { width: 96px; white-space: nowrap; }
.up { margin-right: 12px; margin-top: -2px; }
.wifi { margin-right: 7px; }
.spk { margin-right: 10px; }
.bat { margin-right: 4px; }
.clock { width: 64px; font-size: 12px; line-height: 19px; text-align: center; color: #eee; letter-spacing: -.1px; margin-top: 1px; }
.notif { position: relative; margin-left: 11px; }
.nbadge { position: absolute; left: 7px; top: 8px; width: 17px; height: 17px; border-radius: 50%; background: #333; border: 1.500px solid #888; color: #eee; font-size: 11px; line-height: 14px; text-align: center; font-weight: 700; }
```
